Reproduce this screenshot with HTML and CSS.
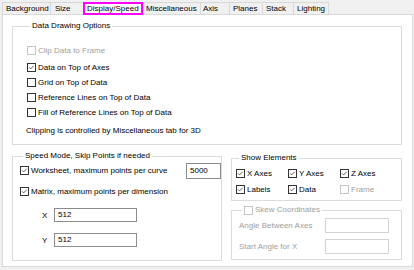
FILE: index.html
```html
<!DOCTYPE html>
<html>
<head>
<meta charset="utf-8">
<link rel="stylesheet" href="styles.css">
</head>
<body>
<div class="dialog">
  <div class="tabs">
    <div class="tab t-bg">Background</div>
    <div class="tab t-size">Size</div>
    <div class="tab tab-active t-disp">Display/Speed</div>
    <div class="tab t-misc">Miscellaneous</div>
    <div class="tab t-axis">Axis</div>
    <div class="tab t-planes">Planes</div>
    <div class="tab t-stack">Stack</div>
    <div class="tab t-light">Lighting</div>
  </div>
  <div class="panel">
    <fieldset class="group g-drawing">
      <legend>Data Drawing Options</legend>
      <div class="row r1 disabled"><span class="cb"></span><span>Clip Data to Frame</span></div>
      <div class="row r2"><span class="cb"><svg viewBox="0 0 9 9"><polyline points="1.5,4.3 3.4,6.3 7.4,2.2"/></svg></span><span>Data on Top of Axes</span></div>
      <div class="row"><span class="cb"></span><span>Grid on Top of Data</span></div>
      <div class="row"><span class="cb"></span><span>Reference Lines on Top of Data</span></div>
      <div class="row"><span class="cb"></span><span>Fill of Reference Lines on Top of Data</span></div>
      <div class="note">Clipping is controlled by Miscellaneous tab for 3D</div>
    </fieldset>

    <div class="bottom">
      <fieldset class="group g-speed">
        <legend>Speed Mode, Skip Points if needed</legend>
        <div class="row s1"><span class="cb"><svg viewBox="0 0 9 9"><polyline points="1.5,4.3 3.4,6.3 7.4,2.2"/></svg></span><span>Worksheet, maximum points per curve</span><span class="input in-pts">5000</span></div>
        <div class="row s2"><span class="cb"><svg viewBox="0 0 9 9"><polyline points="1.5,4.3 3.4,6.3 7.4,2.2"/></svg></span><span>Matrix, maximum points per dimension</span></div>
        <div class="row s3"><span class="dim-label">X</span><span class="input in-dim">512</span></div>
        <div class="row s4"><span class="dim-label">Y</span><span class="input in-dim">512</span></div>
      </fieldset>

      <div class="right-col">
        <fieldset class="group g-show">
          <legend>Show Elements</legend>
          <div class="show-grid">
            <div class="row"><span class="cb"><svg viewBox="0 0 9 9"><polyline points="1.5,4.3 3.4,6.3 7.4,2.2"/></svg></span><span>X Axes</span></div>
            <div class="row"><span class="cb"><svg viewBox="0 0 9 9"><polyline points="1.5,4.3 3.4,6.3 7.4,2.2"/></svg></span><span>Y Axes</span></div>
            <div class="row"><span class="cb"><svg viewBox="0 0 9 9"><polyline points="1.5,4.3 3.4,6.3 7.4,2.2"/></svg></span><span>Z Axes</span></div>
            <div class="row"><span class="cb"><svg viewBox="0 0 9 9"><polyline points="1.5,4.3 3.4,6.3 7.4,2.2"/></svg></span><span>Labels</span></div>
            <div class="row"><span class="cb"><svg viewBox="0 0 9 9"><polyline points="1.5,4.3 3.4,6.3 7.4,2.2"/></svg></span><span>Data</span></div>
            <div class="row disabled"><span class="cb"></span><span>Frame</span></div>
          </div>
        </fieldset>

        <fieldset class="group g-skew disabled">
          <legend><span class="legend-row"><span class="cb"></span><span>Skew Coordinates</span></span></legend>
          <div class="row k1"><span>Angle Between Axes</span><span class="input in-skew"></span></div>
          <div class="row k2"><span>Start Angle for X</span><span class="input in-skew"></span></div>
        </fieldset>
      </div>
    </div>
  </div>
</div>
</body>
</html>
```

FILE: styles.css
```css
* { box-sizing: border-box; }

html, body {
  margin: 0;
  padding: 0;
  background: #f0f0f0;
}

body {
  width: 414px;
  height: 270px;
  overflow: hidden;
  font-family: "Liberation Sans", Arial, sans-serif;
  font-size: 8px;
  color: #000;
}

.dialog {
  padding: 0 0 0 2px;
}

/* ---------- tabs ---------- */
.tabs {
  display: flex;
  align-items: flex-start;
  height: 14px;
  padding-top: 2px;
}

.tab {
  height: 12px;
  line-height: 10px;
  padding: 1px 0 0 3px;
  border: 1px solid #d9d9d9;
  border-right: none;
  border-bottom: none;
  background: #f0f0f0;
  white-space: nowrap;
  overflow: hidden;
  color: #000;
}

.t-bg { width: 48px; }
.t-size { width: 33px; padding-left: 4px; }
.t-disp { width: 60px; }
.t-misc { width: 57px; padding-left: 2px; }
.t-axis { width: 29px; padding-left: 2px; }
.t-planes { width: 33px; }
.t-stack { width: 31px; }
.t-light { width: 36px; border-right: 1px solid #d9d9d9; }

.tab-active {
  position: relative;
  z-index: 2;
  height: 13px;
  background: #fff;
  border: 2px solid #ff00ff;
  padding: 0 0 0 2px;
  line-height: 9px;
}

/* ---------- panel ---------- */
.panel {
  width: 411px;
  height: 253px;
  background: #fff;
  border: 1px solid #d9d9d9;
  padding: 5px 10px 0 9px;
}

.group {
  margin: 0;
  padding: 0;
  min-width: 0;
  border: 1px solid #dcdcdc;
}

.group legend {
  margin-left: 3px;
  padding: 0 2px;
  line-height: 12px;
  height: 12px;
  font-size: 8px;
  white-space: nowrap;
}

.row {
  display: flex;
  align-items: center;
  height: 15px;
  white-space: nowrap;
}

.cb {
  flex: none;
  width: 9px;
  height: 9px;
  border: 1px solid #333;
  background: #fff;
  margin-right: 2px;
  position: relative;
}

.cb svg {
  display: block;
  width: 7px;
  height: 7px;
  fill: none;
  stroke: #333;
  stroke-width: 1;
}

.disabled {
  color: #a0a0a0;
}

.disabled .cb {
  border-color: #c6c6c6;
}

/* ---------- data drawing ---------- */
.g-drawing {
  padding: 11px 0 6px 14px;
}

.g-drawing .r2 { margin-top: 2px; }

.note {
  height: 14px;
  line-height: 14px;
  margin-top: 4px;
  margin-left: -1px;
}

/* ---------- bottom ---------- */
.bottom {
  display: grid;
  grid-template-columns: 210px 171px;
  column-gap: 9px;
  align-items: start;
  margin-top: 5px;
}

.g-speed {
  padding: 0 0 13px 7px;
}

.g-speed .s1 { height: 17px; }
.g-speed .s2 { height: 14px; margin-top: 5px; }
.g-speed .s3 { height: 14px; margin-top: 10px; }
.g-speed .s4 { height: 14px; margin-top: 11px; }

.input {
  display: block;
  flex: none;
  background: #fff;
  border: 1px solid #8c8c8c;
  padding-left: 3px;
  line-height: 12px;
  color: #000;
}

.in-pts {
  width: 35px;
  height: 16px;
  line-height: 14px;
  margin-left: auto;
}

.dim-label {
  width: 34px;
  padding-left: 22px;
}

.in-dim {
  width: 83px;
  height: 14px;
}

.right-col {
  padding-top: 2px;
}

.g-show {
  padding: 2px 0 4px 4px;
}

.show-grid {
  display: grid;
  grid-template-columns: 52px 52px 52px;
  row-gap: 2px;
}

.show-grid .row { height: 14px; }

.g-skew {
  margin-top: 3px;
  padding: 0 12px 5px 7px;
}

.legend-row {
  display: flex;
  align-items: center;
  height: 12px;
}

.g-skew .row { height: 15px; }
.g-skew .k1 { margin-top: 2px; }
.g-skew .k2 { margin-top: 6px; }

.in-skew {
  width: 64px;
  height: 15px;
  margin-left: auto;
  border-color: #d4d4d4;
}
```
